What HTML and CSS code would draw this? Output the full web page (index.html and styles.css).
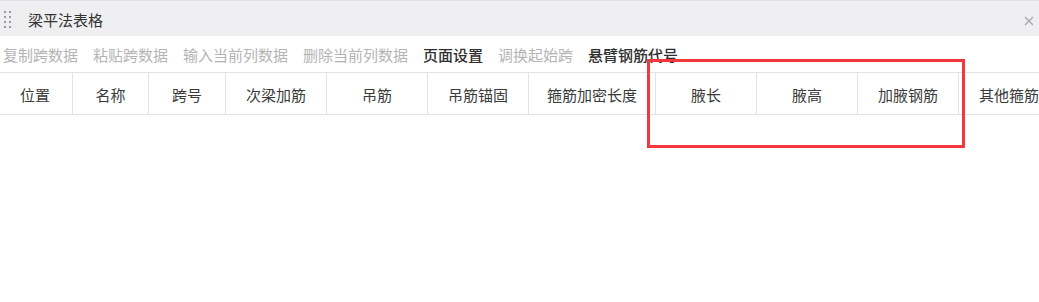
FILE: index.html
```html
<!DOCTYPE html>
<html lang="zh">
<head>
<meta charset="utf-8">
<title>梁平法表格</title>
<link rel="stylesheet" href="styles.css">
</head>
<body>
<div class="panel">
  <div class="titlebar">
    <svg class="drag" width="8" height="18" viewBox="0 0 8 18">
      <rect x="0" y="0" width="2" height="2"/><rect x="5" y="0" width="2" height="2"/>
      <rect x="0" y="5" width="2" height="2"/><rect x="5" y="5" width="2" height="2"/>
      <rect x="0" y="10" width="2" height="2"/><rect x="5" y="10" width="2" height="2"/>
      <rect x="0" y="15" width="2" height="2"/><rect x="5" y="15" width="2" height="2"/>
    </svg>
    <span class="title">梁平法表格</span>
    <svg class="close" width="10" height="10" viewBox="0 0 10 10">
      <path d="M1 1 L9 9 M9 1 L1 9" stroke="#a8a8a8" stroke-width="1.4" fill="none"/>
    </svg>
  </div>
  <div class="toolbar">
    <span class="tb disabled">复制跨数据</span>
    <span class="tb disabled">粘贴跨数据</span>
    <span class="tb disabled">输入当前列数据</span>
    <span class="tb disabled">删除当前列数据</span>
    <span class="tb active">页面设置</span>
    <span class="tb disabled">调换起始跨</span>
    <span class="tb active">悬臂钢筋代号</span>
  </div>
  <div class="table">
    <div class="head">
      <div class="th">位置</div>
      <div class="th">名称</div>
      <div class="th">跨号</div>
      <div class="th">次梁加筋</div>
      <div class="th">吊筋</div>
      <div class="th">吊筋锚固</div>
      <div class="th">箍筋加密长度</div>
      <div class="th">腋长</div>
      <div class="th">腋高</div>
      <div class="th">加腋钢筋</div>
      <div class="th">其他箍筋</div>
    </div>
  </div>
  <div class="highlight"></div>
</div>
</body>
</html>
```
FILE: styles.css
```css
html, body {
  margin: 0;
  padding: 0;
  background: #ffffff;
}
body {
  width: 1039px;
  height: 302px;
  overflow: hidden;
  font-family: "Noto Sans CJK SC", "Noto Sans", sans-serif;
  font-size: 15px;
  color: #333333;
}
.panel {
  position: relative;
  width: 1039px;
  height: 302px;
  overflow: hidden;
}
.titlebar {
  height: 35px;
  border-top: 1px solid #e2e2e4;
  background: #efeff1;
  display: flex;
  align-items: center;
}
.drag {
  fill: #9a9a9a;
  margin-left: 4px;
  margin-top: 2px;
}
.title {
  margin-left: 16px;
  color: #333333;
  line-height: 20px;
  margin-top: 3px;
}
.close {
  margin-left: auto;
  margin-right: 5px;
  margin-top: 4px;
}
.toolbar {
  height: 36px;
  display: flex;
  align-items: center;
  padding-left: 3px;
  gap: 15px;
  white-space: nowrap;
}
.tb {
  line-height: 20px;
  margin-top: 1px;
}
.tb.disabled {
  color: #b4b4b4;
}
.tb.active {
  color: #2f2f2f;
  font-weight: 500;
}
.table {
  border-top: 1px solid #e2e2e2;
  border-bottom: 1px solid #e2e2e2;
  width: 1160px;
}
.head {
  display: grid;
  grid-template-columns: 73px 76px 77px 101px 101px 101px 127px 101px 101px 101px 101px;
  height: 41px;
}
.th {
  border-right: 1px solid #e2e2e2;
  display: flex;
  align-items: center;
  justify-content: center;
  color: #3a3a3a;
  white-space: nowrap;
  padding-top: 2px;
}
.head .th:first-child {
  padding-right: 2px;
}
.highlight {
  position: absolute;
  left: 647px;
  top: 59px;
  width: 312px;
  height: 83px;
  border: 3px solid #f2383a;
}
```
